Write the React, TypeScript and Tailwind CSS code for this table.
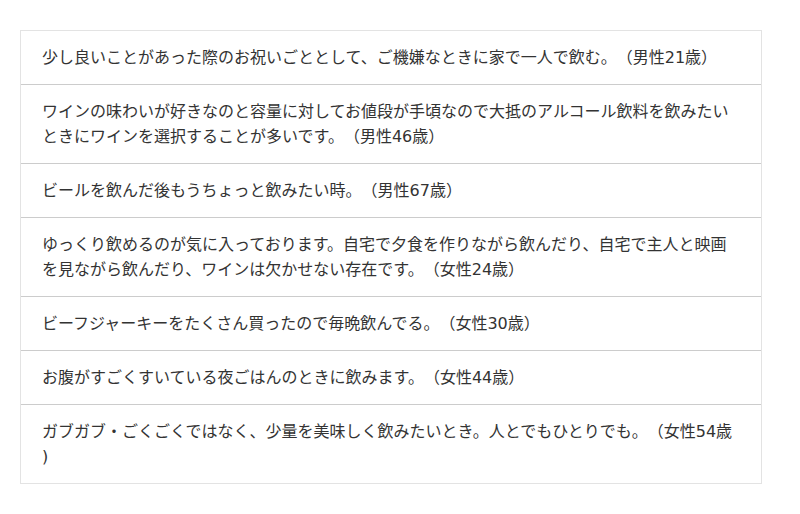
import React from 'react';

const comments: string[] = [
  '少し良いことがあった際のお祝いごととして、ご機嫌なときに家で一人で飲む。（男性21歳）',
  'ワインの味わいが好きなのと容量に対してお値段が手頃なので大抵のアルコール飲料を飲みたいときにワインを選択することが多いです。（男性46歳）',
  'ビールを飲んだ後もうちょっと飲みたい時。（男性67歳）',
  'ゆっくり飲めるのが気に入っております。自宅で夕食を作りながら飲んだり、自宅で主人と映画を見ながら飲んだり、ワインは欠かせない存在です。（女性24歳）',
  'ビーフジャーキーをたくさん買ったので毎晩飲んでる。（女性30歳）',
  'お腹がすごくすいている夜ごはんのときに飲みます。（女性44歳）',
  'ガブガブ・ごくごくではなく、少量を美味しく飲みたいとき。人とでもひとりでも。（女性54歳)',
];

const App: React.FC = () => {
  return (
    <div className="w-[800px] h-[514px] bg-white pt-[30px] pl-[20px] font-['DejaVu_Sans','Noto_Sans_CJK_JP',sans-serif]">
      <div className="w-[742px] border border-[#e3e3e3]">
        {comments.map((text, i) => (
          <div
            key={i}
            className={`pl-[21px] pr-[27px] py-[14px] text-[16px] leading-[25px] text-[#333] [text-spacing-trim:space-all] [line-break:anywhere] ${
              i > 0 ? 'border-t border-[#cccccc]' : ''
            }`}
          >
            {text}
          </div>
        ))}
      </div>
    </div>
  );
};

export default App;
